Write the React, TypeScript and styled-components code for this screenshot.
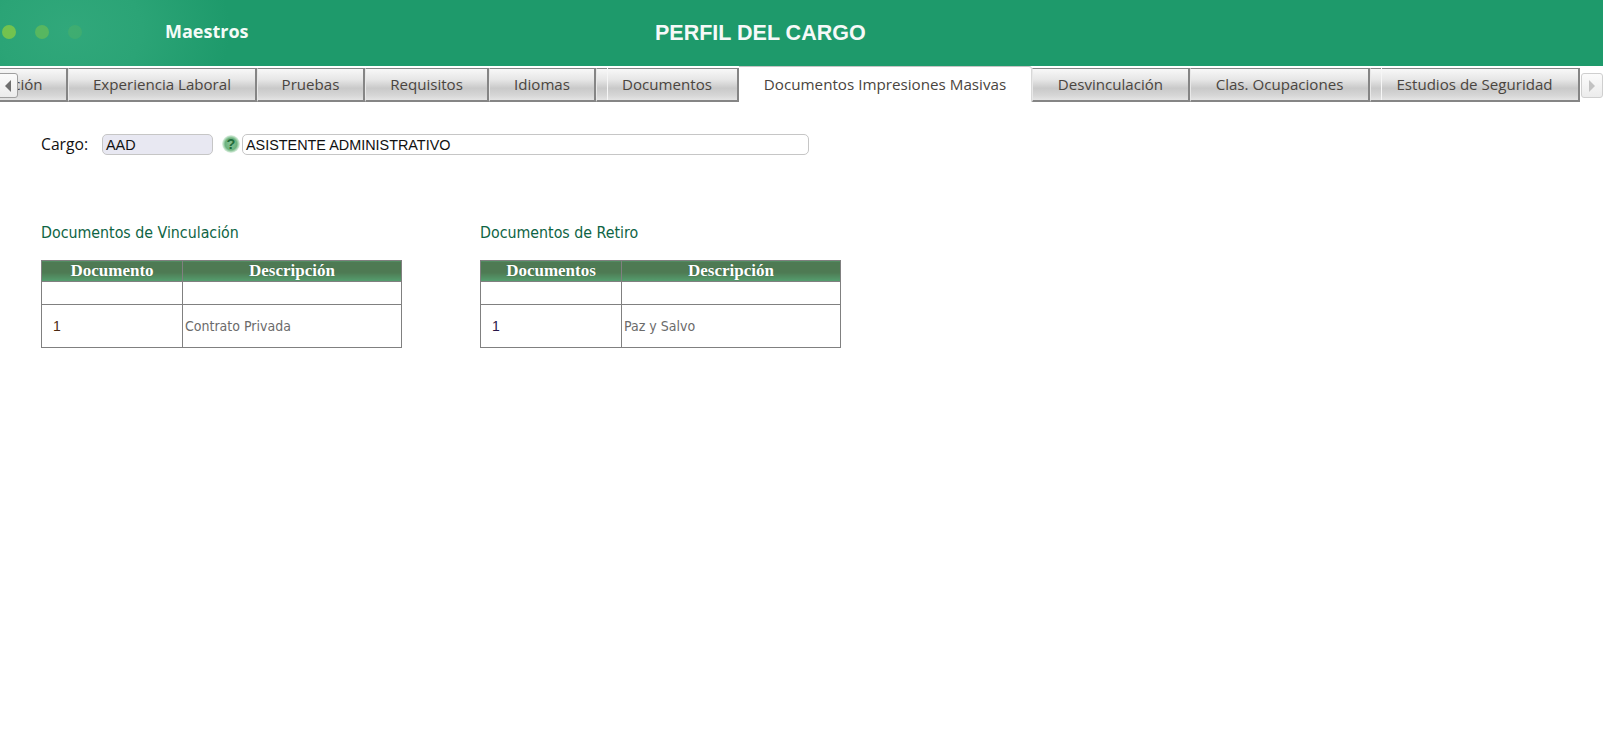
import React from "react";
import styled, { createGlobalStyle } from "styled-components";

const Global = createGlobalStyle`
  html, body { margin: 0; padding: 0; background: #fff; }
  body { font-family: "Open Sans", "Liberation Sans", sans-serif; overflow: hidden; }
  * { box-sizing: border-box; }
`;

const Page = styled.div`
  width: 1603px;
  height: 736px;
  display: flex;
  flex-direction: column;
  background: #fff;
`;

const Header = styled.header`
  height: 66px;
  flex: none;
  display: flex;
  align-items: center;
  background:
    radial-gradient(ellipse 160px 120px at 70px 30px, #31a87b 0%, #2ba476 45%, rgba(30, 154, 107, 0) 100%),
    #1e9a6b;
`;

const Dots = styled.div`
  display: flex;
  gap: 19px;
  margin-left: 2px;
  margin-top: -2px;
  width: 163px;
  flex: none;
`;

const Dot = styled.span<{ $alpha: number }>`
  width: 14px;
  height: 14px;
  border-radius: 50%;
  background: rgba(128, 200, 72, ${(p) => p.$alpha});
`;

const Section = styled.div`
  width: 490px;
  flex: none;
  margin-top: -4px;
  font: 700 18px "Open Sans", sans-serif;
  color: #f4fbf7;
`;

const Title = styled.h1`
  margin: 1px 0 0;
  font: 700 21.5px "Liberation Sans", sans-serif;
  color: #f6f9f8;
`;

const TabBar = styled.nav`
  position: relative;
  height: 36px;
  flex: none;
  display: flex;
  overflow: hidden;
  background: #fff;
`;

const Tab = styled.div<{ $w: number; $seam?: boolean }>`
  position: relative;
  flex: none;
  width: ${(p) => p.$w}px;
  height: 34px;
  margin-top: 2px;
  padding-bottom: 2px;
  display: flex;
  align-items: center;
  justify-content: center;
  font-size: 15.1px;
  color: #4a4540;
  border: 2px solid #858585;
  border-top-width: 1px;
  border-left: 1px solid #e8e8e8;
  background: linear-gradient(#f8f8f8 0%, #e6e6e6 35%, #c9c9c9 62%, #d6d6d6 85%, #e4e4e4 100%);
  ${(p) =>
    p.$seam &&
    `&::before { content: ""; position: absolute; left: 10px; top: -1px; bottom: 0; width: 1px; background: #f6f6f6; }`}
`;

const ActiveTab = styled.div<{ $w: number }>`
  flex: none;
  width: ${(p) => p.$w}px;
  height: 36px;
  padding-bottom: 1px;
  display: flex;
  align-items: center;
  justify-content: center;
  font-size: 15.2px;
  color: #4a4540;
  background: #fff;
  border-top: 1px solid #c4c4c4;
  border-right: 1px solid #d8d8d8;
  border-top-right-radius: 3px;
`;

const FirstTab = styled(Tab)`
  margin-left: -62px;
`;

const ScrollButton = styled.button<{ $side: "left" | "right" }>`
  position: absolute;
  top: 7px;
  ${(p) => (p.$side === "left" ? "left: -4px;" : "right: 0;")}
  width: 22px;
  height: 25px;
  padding: 0;
  display: flex;
  align-items: center;
  justify-content: center;
  border: 1px solid ${(p) => (p.$side === "left" ? "#a0a0a0" : "#cfcfcf")};
  border-radius: 3px;
  background: linear-gradient(#fbfbfb, #ececec);
`;

const Arrow = styled.span<{ $side: "left" | "right" }>`
  width: 0;
  height: 0;
  border-top: 6px solid transparent;
  border-bottom: 6px solid transparent;
  ${(p) =>
    p.$side === "left"
      ? "border-right: 6px solid #6f6f6f; margin-left: 2px;"
      : "border-left: 6px solid #c2c2c2;"}
`;

const Content = styled.main`
  padding: 32px 0 0 41px;
`;

const CargoRow = styled.div`
  display: flex;
  align-items: center;
  height: 21px;
`;

const CargoLabel = styled.label`
  width: 61px;
  flex: none;
  margin-top: -2px;
  font: 15.7px "Open Sans", sans-serif;
  color: #111;
`;

const Field = styled.div<{ $w: number; $code?: boolean }>`
  width: ${(p) => p.$w}px;
  height: 21px;
  flex: none;
  display: flex;
  align-items: center;
  padding-left: 3px;
  font: 14.4px "Liberation Sans", sans-serif;
  color: #111;
  border: 1px solid #c6c6c6;
  border-radius: 5px;
  background: ${(p) => (p.$code ? "#e8e8f2" : "#fff")};
`;

const HelpIcon = styled.svg`
  flex: none;
  width: 18px;
  height: 18px;
  margin: -1px 2px 0 9px;
`;

const Tables = styled.div`
  display: flex;
  gap: 78px;
  margin-top: 64px;
`;

const Block = styled.section`
  width: 361px;
`;

const BlockTitle = styled.h2`
  margin: 0 0 17px;
  height: 24px;
  font: 400 15.8px/27px "DejaVu Sans Condensed", "Noto Sans", sans-serif;
  font-stretch: condensed;
  color: #0e6444;
`;

const Grid = styled.table`
  width: 361px;
  table-layout: fixed;
  border-collapse: collapse;
  border: 1px solid #808080;
`;

const HeadCell = styled.th`
  height: 21px;
  padding: 0;
  border: 1px solid #808080;
  border-bottom: 0;
  font: 700 17px/20px "Liberation Serif", serif;
  color: #fff;
  text-shadow: 0 0 1px #2f5a3a;
  background: linear-gradient(#4e7a53 0%, #4e7a53 55%, #55a070 100%);
`;

const Cell = styled.td<{ $h: number }>`
  height: ${(p) => p.$h}px;
  padding: 0 0 0 2px;
  border: 1px solid #808080;
  font: 14px "DejaVu Sans Condensed", "Noto Sans", sans-serif;
  font-stretch: condensed;
  color: #6b6b6b;
`;

const NumCell = styled(Cell)<{ $ink: string }>`
  padding-left: 11px;
  font: 14px "Liberation Sans", sans-serif;
  color: ${(p) => p.$ink};
`;

const tabs: [string, number][] = [
  ["Experiencia Laboral", 189],
  ["Pruebas", 108],
  ["Requisitos", 124],
  ["Idiomas", 107],
];

const Table = ({ first, value, ink }: { first: string; value: string; ink: string }) => (
  <Grid>
    <colgroup>
      <col style={{ width: 141 }} />
      <col />
    </colgroup>
    <thead>
      <tr>
        <HeadCell>{first}</HeadCell>
        <HeadCell>Descripción</HeadCell>
      </tr>
    </thead>
    <tbody>
      <tr>
        <Cell $h={23} />
        <Cell $h={23} />
      </tr>
      <tr>
        <NumCell $h={43} $ink={ink}>
          1
        </NumCell>
        <Cell $h={43}>{value}</Cell>
      </tr>
    </tbody>
  </Grid>
);

export default function App() {
  return (
    <Page>
      <Global />
      <Header>
        <Dots>
          <Dot $alpha={0.85} />
          <Dot $alpha={0.5} />
          <Dot $alpha={0.18} />
        </Dots>
        <Section>Maestros</Section>
        <Title>PERFIL DEL CARGO</Title>
      </Header>
      <TabBar>
        <FirstTab $w={130}>Vinculación</FirstTab>
        {tabs.map(([t, w]) => (
          <Tab key={t} $w={w}>
            {t}
          </Tab>
        ))}
        <Tab $w={143} $seam>
          Documentos
        </Tab>
        <ActiveTab $w={293}>Documentos Impresiones Masivas</ActiveTab>
        <Tab $w={158}>Desvinculación</Tab>
        <Tab $w={180}>Clas. Ocupaciones</Tab>
        <Tab $w={210} $seam>
          Estudios de Seguridad
        </Tab>
        <ScrollButton $side="left">
          <Arrow $side="left" />
        </ScrollButton>
        <ScrollButton $side="right">
          <Arrow $side="right" />
        </ScrollButton>
      </TabBar>
      <Content>
        <CargoRow>
          <CargoLabel>Cargo:</CargoLabel>
          <Field $w={111} $code>
            AAD
          </Field>
          <HelpIcon viewBox="0 0 18 18">
            <defs>
              <radialGradient id="help" cx="50%" cy="50%" r="50%">
                <stop offset="0%" stopColor="#8cc49a" />
                <stop offset="65%" stopColor="#6bb27d" />
                <stop offset="85%" stopColor="#b4dbbd" />
                <stop offset="100%" stopColor="#e6f3e9" />
              </radialGradient>
            </defs>
            <circle cx="9" cy="9" r="9" fill="url(#help)" />
            <text
              x="9"
              y="14"
              textAnchor="middle"
              fontFamily="Liberation Sans"
              fontWeight="700"
              fontSize="14.5"
              fill="#1f6b3a"
            >
              ?
            </text>
          </HelpIcon>
          <Field $w={567}>ASISTENTE ADMINISTRATIVO</Field>
        </CargoRow>
        <Tables>
          <Block>
            <BlockTitle>Documentos de Vinculación</BlockTitle>
            <Table first="Documento" value="Contrato Privada" ink="#4b2a10" />
          </Block>
          <Block>
            <BlockTitle>Documentos de Retiro</BlockTitle>
            <Table first="Documentos" value="Paz y Salvo" ink="#2a1648" />
          </Block>
        </Tables>
      </Content>
    </Page>
  );
}
